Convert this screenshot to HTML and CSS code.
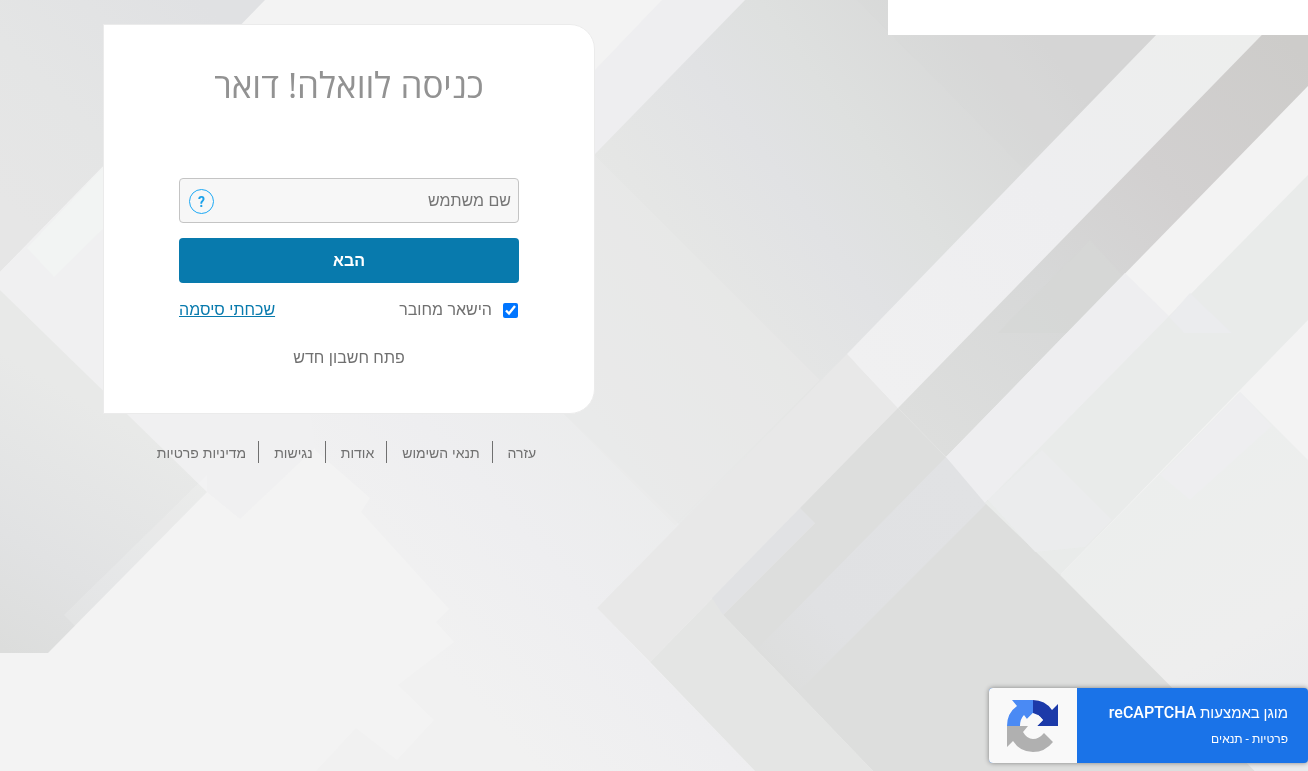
FILE: index.html
```html
<!DOCTYPE html>
<html lang="he" dir="rtl">
<head>
    <meta charset="UTF-8">
    <meta name="viewport" content="width=device-width, initial-scale=1.0">
    <title>כניסה לוואלה! דואר</title>
    <link rel="stylesheet" href="styles.css">
</head>
<body>
    <svg class="bg" viewBox="0 0 1308 771" preserveAspectRatio="xMinYMin slice" aria-hidden="true">
        <defs>
            <linearGradient id="corner" gradientUnits="userSpaceOnUse" x1="0" y1="200" x2="200" y2="0">
                <stop offset="0" stop-color="#e6e6e6"/>
                <stop offset=".4" stop-color="#e4e5e5"/>
                <stop offset="1" stop-color="#e0e1e3"/>
            </linearGradient>
            <linearGradient id="left" gradientUnits="userSpaceOnUse" x1="20" y1="660" x2="150" y2="440">
                <stop offset="0" stop-color="#dcdddc"/>
                <stop offset=".4" stop-color="#e1e2e3"/>
                <stop offset="1" stop-color="#e8e9e8"/>
            </linearGradient>
            <linearGradient id="haze" gradientUnits="userSpaceOnUse" x1="400" y1="620" x2="620" y2="420">
                <stop offset="0" stop-color="#f1f1f1"/>
                <stop offset=".5" stop-color="#eeeef0"/>
                <stop offset="1" stop-color="#ebecec"/>
            </linearGradient>
            <linearGradient id="slab" gradientUnits="userSpaceOnUse" x1="580" y1="400" x2="1050" y2="50">
                <stop offset="0" stop-color="#e9eaea"/>
                <stop offset=".3" stop-color="#e5e6e5"/>
                <stop offset=".5" stop-color="#e1e2e4"/>
                <stop offset=".65" stop-color="#dee0df"/>
                <stop offset="1" stop-color="#d5d5d5"/>
            </linearGradient>
            <linearGradient id="ray" gradientUnits="userSpaceOnUse" x1="1230" y1="20" x2="870" y2="380">
                <stop offset="0" stop-color="#edeeed"/>
                <stop offset=".5" stop-color="#eeeef0"/>
                <stop offset="1" stop-color="#f0f0f1"/>
            </linearGradient>
            <linearGradient id="dark" gradientUnits="userSpaceOnUse" x1="1308" y1="60" x2="920" y2="430">
                <stop offset="0" stop-color="#cdccca"/>
                <stop offset=".35" stop-color="#d2d0d0"/>
                <stop offset=".65" stop-color="#d7d8d8"/>
                <stop offset="1" stop-color="#dddedd"/>
            </linearGradient>
            <linearGradient id="bluish" gradientUnits="userSpaceOnUse" x1="966" y1="480" x2="770" y2="676">
                <stop offset="0" stop-color="#e1e2e4"/>
                <stop offset=".7" stop-color="#e0e1e3"/>
                <stop offset="1" stop-color="#dddedd"/>
            </linearGradient>
            <linearGradient id="fog" gradientUnits="userSpaceOnUse" x1="1100" y1="500" x2="1260" y2="771">
                <stop offset="0" stop-color="#eceeed"/>
                <stop offset=".6" stop-color="#eeeeee"/>
                <stop offset="1" stop-color="#eaebed"/>
            </linearGradient>
        </defs>
        <path fill="#f3f3f3" d="M0 0H1308V771H0z"/>
        <path fill="url(#corner)" d="M0 0H265L0 272z"/>
        <path fill="#f0f0f1" d="M0 272L103 167V390L352 413L240 519L207 492L0 290z"/>
        <path fill="#f2f4f3" d="M27 248L54 277L103 229V167z"/>
        <path fill="url(#haze)" d="M310 413H620L690 530L597 608L755 771H316L356 728L397 760L434 720L398 685L454 642L436 622L449 609L361 512L370 498L315 450z"/>
        <path fill="url(#left)" d="M0 290L207 492L48 653H0z"/>
        <path fill="#fff" opacity=".15" d="M64 615L207 475V492L75 626z"/>
        <path fill="#eeeef0" d="M662 0H745L595 155V70z"/>
        <path fill="url(#slab)" d="M745 0H1190L860 360L680 525L560 410V190z"/>
        <path fill="#e9e9e9" opacity=".5" d="M595 155L820 380L675 525L560 410z"/>
        <path fill="#d8d8d8" opacity=".2" d="M857 0H1190L1023 168z"/>
        <path fill="#e8e8e8" d="M847 354L898 408L650 662L597 608z"/>
        <path fill="#e4e5e4" d="M898 408L650 662L755 771H873L723 615L912 426z"/>
        <path fill="#e1e2e4" d="M800 508L712 598L723 615L815 523z"/>
        <path fill="#dddedd" d="M898 408L946 457L1255 771H873L723 615L815 523L800 508z"/>
        <path fill="url(#bluish)" d="M946 457L988 502L800 690L758 648z"/>
        <path fill="url(#ray)" d="M1190 0H1296L898 408L847 354z"/>
        <path fill="url(#dark)" d="M1296 0H1308V86L946 457L898 408z"/>
        <path fill="#d5d7d6" opacity=".7" d="M998 333L1090 240L1123 276L1068 333z"/>
        <path fill="#eeeef0" d="M1125 273L1170 317L985 503L946 457z"/>
        <path fill="#e9ebea" d="M1308 175V320L1060 575L985 503z"/>
        <path fill="#ebecee" d="M988 500L1042 450L1112 520L1085 547L1035 552z" opacity=".7"/>
        <path fill="#ebecee" d="M1190 293L1232 333H1184L1169 317z"/>
        <path fill="url(#fog)" d="M1240 392L1308 460V771H1255L1060 575z"/>
        <path fill="#eeeef0" d="M1240 392L1272 426L1190 500L1160 475z"/>
    </svg>

    <div class="page">
        <div class="banner"></div>
        <main class="content">
            <section class="card">
                <h1>כניסה לוואלה! דואר</h1>
                <form>
                    <div class="field">
                        <input type="text" id="username" placeholder="שם משתמש" aria-label="שם משתמש">
                        <button type="button" class="help" aria-label="עזרה">?</button>
                    </div>
                    <button type="submit" class="next">הבא</button>
                    <div class="options">
                        <label for="remember"><input type="checkbox" id="remember" checked>הישאר מחובר</label>
                        <a href="#">שכחתי סיסמה</a>
                    </div>
                    <a href="#" class="signup">פתח חשבון חדש</a>
                </form>
            </section>
            <nav class="links">
                <a href="#">עזרה</a>
                <a href="#">תנאי השימוש</a>
                <a href="#">אודות</a>
                <a href="#">נגישות</a>
                <a href="#">מדיניות פרטיות</a>
            </nav>
        </main>
    </div>

    <aside class="recaptcha">
        <div class="recaptcha-text">
            <p>מוגן באמצעות <strong>reCAPTCHA</strong></p>
            <small><a href="#">פרטיות</a> - <a href="#">תנאים</a></small>
        </div>
        <div class="recaptcha-logo">
            <svg viewBox="0 0 52 52" width="52" height="52" aria-hidden="true">
                <path fill="#4a8af4" d="M26 0H5L10 6Q0 13 0 26H13Q13 19 17 15L20 19L26 13z"/>
                <path fill="#1c3aa9" d="M26 0Q38 0 45 10L51 4V26H30L36 20Q33 16 31 15L26 21z"/>
                <path fill="#f9f9f9" d="M20 19L26 13L31 15L36 20L30 26H20z"/>
                <path fill="#b0b0b0" d="M0 26H21L16 32Q20 39 26 39Q32 39 37 33L46 42Q38 52 26 52Q13 52 6 41L0 47z"/>
            </svg>
        </div>
    </aside>
</body>
</html>
```
FILE: styles.css
```css
*{
    box-sizing: border-box;
    margin: 0;
    padding: 0;
}
body{
    min-height: 100vh;
    background-color: #f3f3f3;
    font-family: "Liberation Sans", Arial, sans-serif;
    font-size: 16px;
    color: #707070;
}
a{
    color: inherit;
    text-decoration: none;
}
.bg{
    position: fixed;
    top: 0;
    left: 0;
    width: 100%;
    height: 100%;
    z-index: -1;
}
.page{
    display: flex;
    justify-content: space-between;
    align-items: flex-start;
}
.banner{
    width: 420px;
    height: 35px;
    background-color: white;
}
.content{
    width: 492px;
    margin-top: 24px;
    margin-left: 103px;
}
.card{
    padding: 32px 75px 43px;
    background-color: white;
    border: 1px solid #ebebeb;
    border-radius: 0 25px 25px 0;
}
.card h1{
    height: 121px;
    line-height: 56px;
    font-family: "Open Sans", sans-serif;
    font-size: 35px;
    font-weight: 400;
    color: #929292;
    text-align: center;
    white-space: nowrap;
}
.field{
    position: relative;
    margin-bottom: 15px;
}
.field input{
    display: block;
    width: 100%;
    height: 45px;
    padding: 0 7px 0 44px;
    font: inherit;
    color: inherit;
    background-color: #f7f7f7;
    border: 1px solid #c4c4c4;
    border-radius: 4px;
}
.field input::placeholder{
    color: #757575;
}
.help{
    position: absolute;
    top: 11px;
    left: 10px;
    width: 25px;
    height: 25px;
    font: bold 14px Roboto, sans-serif;
    color: #1ba1ea;
    background: none;
    border: 1px solid #1da9f5;
    border-radius: 50%;
}
.next{
    display: block;
    width: 100%;
    height: 45px;
    font: inherit;
    font-weight: 700;
    color: white;
    background-color: #087aad;
    border: none;
    border-radius: 4px;
}
.options{
    display: flex;
    justify-content: space-between;
    margin-top: 15px;
    line-height: 24px;
}
.options label{
    display: flex;
    align-items: center;
    gap: 11px;
}
.options input{
    width: 15px;
    height: 15px;
    margin-right: 1px;
}
.options a{
    color: #087aad;
    text-decoration: underline;
}
.signup{
    display: block;
    margin-top: 24px;
    line-height: 24px;
    text-align: center;
}
.links{
    display: flex;
    justify-content: center;
    margin-top: 27px;
    padding-right: 8px;
    font-size: 14px;
    line-height: 20px;
}
.links a{
    padding: 2px 12px 0 15px;
}
.links a + a{
    border-right: 1px solid #707070;
}
.recaptcha{
    position: fixed;
    right: 0;
    bottom: 8px;
    display: flex;
    width: 319px;
    height: 75px;
    color: white;
    background-color: #1a73e8;
    border-radius: 4px;
    box-shadow: 0 0 5px gray;
    overflow: hidden;
}
.recaptcha-text{
    flex: 1;
    padding: 13px 20px 0 0;
    font-family: Roboto, "Liberation Sans", sans-serif;
}
.recaptcha-text p{
    line-height: 24px;
    font-size: 15px;
}
.recaptcha-text strong{
    font-size: 16px;
    font-weight: 500;
}
.recaptcha-text small{
    display: block;
    margin-top: 4px;
    line-height: 20px;
    font-size: 12px;
}
.recaptcha-logo{
    display: flex;
    align-items: center;
    justify-content: center;
    width: 88px;
    background-color: #f9f9f9;
}
```
